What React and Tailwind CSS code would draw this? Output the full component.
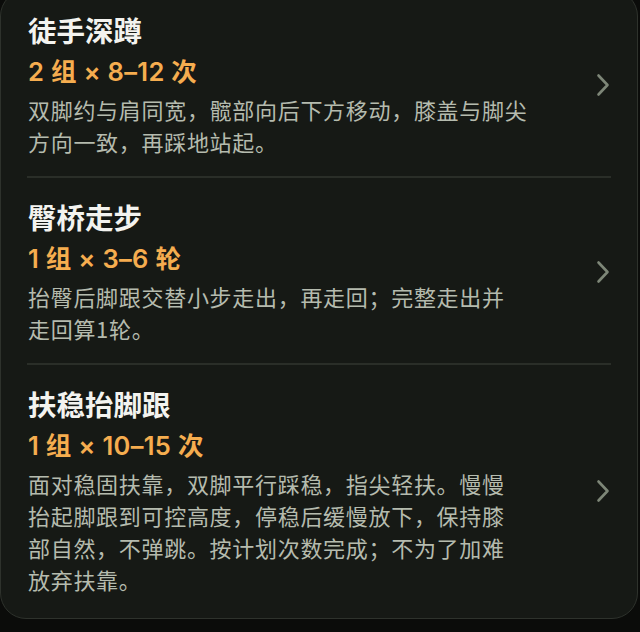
import React from 'react';

const exercises = [
  {
    name: '徒手深蹲',
    dose: '2 组 × 8–12 次',
    lines: ['双脚约与肩同宽，髋部向后下方移动，膝盖与脚尖', '方向一致，再踩地站起。'],
  },
  {
    name: '臀桥走步',
    dose: '1 组 × 3–6 轮',
    lines: ['抬臀后脚跟交替小步走出，再走回；完整走出并', '走回算1轮。'],
  },
  {
    name: '扶稳抬脚跟',
    dose: '1 组 × 10–15 次',
    lines: [
      '面对稳固扶靠，双脚平行踩稳，指尖轻扶。慢慢',
      '抬起脚跟到可控高度，停稳后缓慢放下，保持膝',
      '部自然，不弹跳。按计划次数完成；不为了加难',
      '放弃扶靠。',
    ],
  },
];

function Chevron() {
  return (
    <svg width="14" height="24" viewBox="0 0 14 24" fill="none" className="shrink-0">
      <polyline
        points="2.5,2.5 11.5,12 2.5,21.5"
        stroke="#7d8677"
        strokeWidth="2.6"
        strokeLinecap="round"
        strokeLinejoin="round"
      />
    </svg>
  );
}

export default function App() {
  return (
    <div
      className="min-h-screen bg-[#0b0c0a] pb-[14px]"
      style={{ fontFamily: '"Noto Sans CJK SC", "Noto Sans", sans-serif' }}
    >
      <div className="mt-[-10px] mr-[2px] rounded-[26px] border border-[#2e322c] bg-[#161915]">
        {exercises.map((ex, i) => (
          <div
            key={ex.name}
            className={`mx-[26px] flex items-center pt-[21px] ${
              i < exercises.length - 1 ? 'border-b-2 border-[#2a2e28] pb-[19px]' : 'pb-[23px]'
            }`}
          >
            <div className="flex-1 pl-[1px]">
              <div className="text-[28.5px] leading-[36px] font-bold text-[#f3f3ef]">{ex.name}</div>
              <div
                className="mt-2 text-[25.5px] leading-[32px] font-semibold tracking-[0.3px] text-[#f5ad4f]"
                style={{ fontFamily: 'Inter, "Noto Sans CJK SC", sans-serif' }}
              >
                {ex.dose}
              </div>
              <div className="mt-[5px] text-[22px] leading-[32px] tracking-[0.7px] text-[#b5bbae]">
                {ex.lines.map((l) => (
                  <div key={l} className="whitespace-nowrap">{l}</div>
                ))}
              </div>
            </div>
            <div className="pr-[1px]">
              <Chevron />
            </div>
          </div>
        ))}
      </div>
    </div>
  );
}
